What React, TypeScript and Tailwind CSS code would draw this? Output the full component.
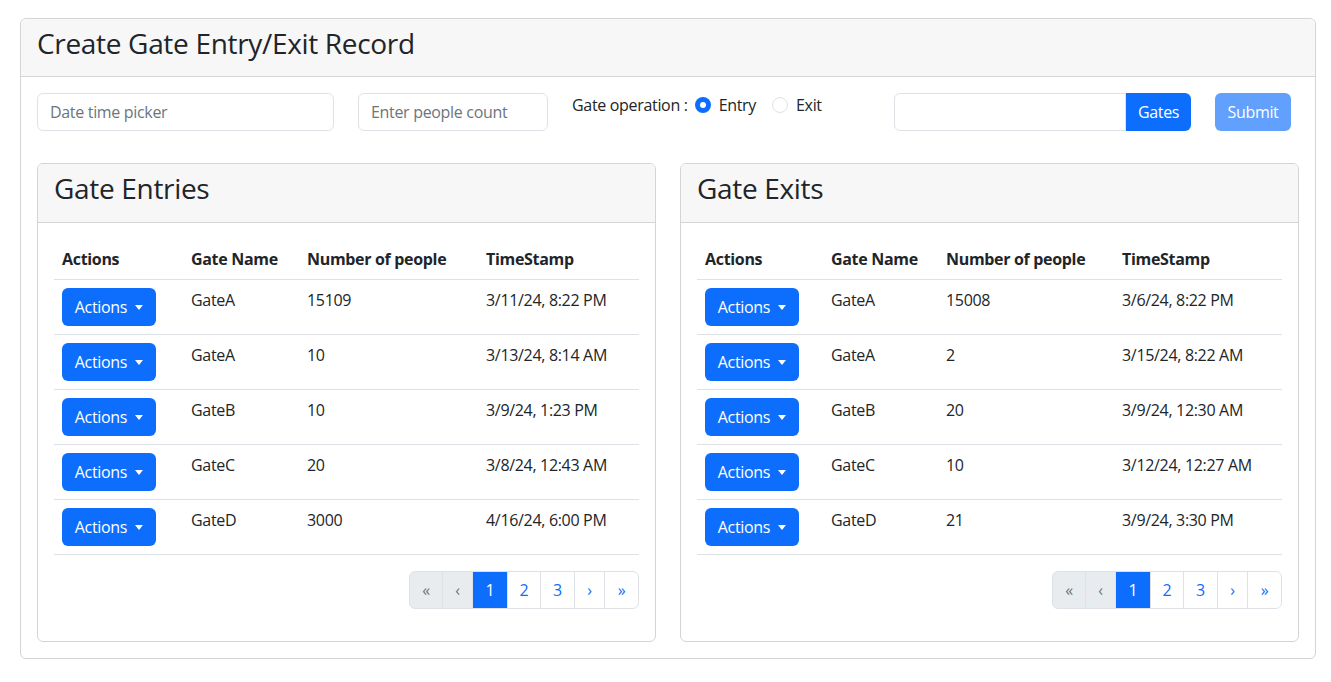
import React from "react";

type Row = { gate: string; count: string; time: string };

const entries: Row[] = [
  { gate: "GateA", count: "15109", time: "3/11/24, 8:22 PM" },
  { gate: "GateA", count: "10", time: "3/13/24, 8:14 AM" },
  { gate: "GateB", count: "10", time: "3/9/24, 1:23 PM" },
  { gate: "GateC", count: "20", time: "3/8/24, 12:43 AM" },
  { gate: "GateD", count: "3000", time: "4/16/24, 6:00 PM" },
];

const exits: Row[] = [
  { gate: "GateA", count: "15008", time: "3/6/24, 8:22 PM" },
  { gate: "GateA", count: "2", time: "3/15/24, 8:22 AM" },
  { gate: "GateB", count: "20", time: "3/9/24, 12:30 AM" },
  { gate: "GateC", count: "10", time: "3/12/24, 12:27 AM" },
  { gate: "GateD", count: "21", time: "3/9/24, 3:30 PM" },
];

const ActionsButton = () => (
  <button className="h-[38px] w-[94px] bg-[#0d6efd] text-white rounded-[6px] flex items-center justify-center gap-[8px] text-[16px]">
    Actions
    <span className="inline-block w-0 h-0 border-t-[5px] border-t-white border-x-[4.5px] border-x-transparent" />
  </button>
);

const Pager = () => {
  const base =
    "h-[38px] flex items-center justify-center border border-[#dee2e6] -ml-px text-[16px]";
  return (
    <div className="flex justify-end mt-[16px] mb-[16px]">
      <div className="flex">
        <span className={`${base} ml-0 w-[34px] rounded-l-[6px] bg-[#e9ecef] text-[#6c757d] text-[13px]`}>«</span>
        <span className={`${base} w-[31px] bg-[#e9ecef] text-[#6c757d] text-[13px]`}>‹</span>
        <span className={`${base} w-[36px] bg-[#0d6efd] border-[#0d6efd] text-white z-10`}>1</span>
        <span className={`${base} w-[34px] text-[#0d6efd]`}>2</span>
        <span className={`${base} w-[35px] text-[#0d6efd]`}>3</span>
        <span className={`${base} w-[31px] text-[#0d6efd] text-[13px]`}>›</span>
        <span className={`${base} w-[35px] rounded-r-[6px] text-[#0d6efd] text-[13px]`}>»</span>
      </div>
    </div>
  );
};

const GateTable = ({ title, rows, widths }: { title: string; rows: Row[]; widths: number[] }) => (
  <div className="border border-[#d3d4d5] rounded-[6px] overflow-hidden">
    <div className="bg-[#f7f7f7] border-b border-[#d3d4d5] px-[16px] pt-[8px] pb-[17px]">
      <h3 className="text-[28px] leading-[33.6px] font-medium">{title}</h3>
    </div>
    <div className="p-[16px]">
      <table className="w-full table-fixed border-collapse">
        <colgroup>
          {widths.map((w, i) => (
            <col key={i} style={{ width: w }} />
          ))}
        </colgroup>
        <thead>
          <tr className="border-b border-[#dee2e6]">
            {["Actions", "Gate Name", "Number of people", "TimeStamp"].map((h) => (
              <th key={h} className="text-left font-bold px-[8px] py-[8px] leading-[24px]">
                {h}
              </th>
            ))}
          </tr>
        </thead>
        <tbody>
          {rows.map((r, i) => (
            <tr key={i} className="border-b border-[#dee2e6] align-top">
              <td className="px-[8px] py-[8px]">
                <ActionsButton />
              </td>
              <td className="px-[8px] py-[8px] leading-[24px]">{r.gate}</td>
              <td className="px-[8px] py-[8px] leading-[24px]">{r.count}</td>
              <td className="px-[8px] py-[8px] leading-[24px]">{r.time}</td>
            </tr>
          ))}
        </tbody>
      </table>
      <Pager />
    </div>
  </div>
);

export default function App() {
  return (
    <div
      className="min-h-screen bg-white text-[#212529] text-[16px] pt-[18px] tracking-[-0.02em]"
      style={{ fontFamily: '"Segoe UI", "Open Sans", sans-serif' }}
    >
      <div className="ml-[20px] w-[1296px] border border-[#d3d4d5] rounded-[6px] overflow-hidden">
        <div className="bg-[#f7f7f7] border-b border-[#d3d4d5] px-[16px] pt-[8px] pb-[15px]">
          <h3 className="text-[28px] leading-[33.6px] font-medium">Create Gate Entry/Exit Record</h3>
        </div>
        <div className="p-[16px]">
          <div className="flex items-start">
            <input
              className="w-[297px] h-[38px] border border-[#dee2e6] rounded-[6px] px-[12px] placeholder-[#6c757d] outline-none"
              placeholder="Date time picker"
            />
            <input
              className="ml-[24px] w-[190px] h-[38px] border border-[#dee2e6] rounded-[6px] px-[12px] placeholder-[#6c757d] outline-none"
              placeholder="Enter people count"
            />
            <div className="ml-[24px] w-[322px] flex items-center leading-[24px]">
              <span>Gate operation :</span>
              <span className="ml-[7px] w-[16px] h-[16px] rounded-full bg-[#0d6efd] flex items-center justify-center">
                <span className="w-[6px] h-[6px] rounded-full bg-white" />
              </span>
              <span className="ml-[8px]">Entry</span>
              <span className="ml-[16px] w-[16px] h-[16px] rounded-full border border-[#dee2e6]" />
              <span className="ml-[8px]">Exit</span>
            </div>
            <div className="flex w-[297px]">
              <input className="flex-1 min-w-0 h-[38px] border border-[#dee2e6] rounded-l-[6px] px-[12px] outline-none" />
              <button className="h-[38px] w-[65px] bg-[#0d6efd] text-white rounded-r-[6px]">Gates</button>
            </div>
            <button className="ml-[24px] h-[38px] w-[76px] bg-[#0d6efd] opacity-65 text-white rounded-[6px]">
              Submit
            </button>
          </div>
          <div className="grid grid-cols-2 gap-[24px] mt-[32px]">
            <GateTable title="Gate Entries" rows={entries} widths={[129, 116, 179, 161]} />
            <GateTable title="Gate Exits" rows={exits} widths={[126, 115, 176, 168]} />
          </div>
        </div>
      </div>
    </div>
  );
}
